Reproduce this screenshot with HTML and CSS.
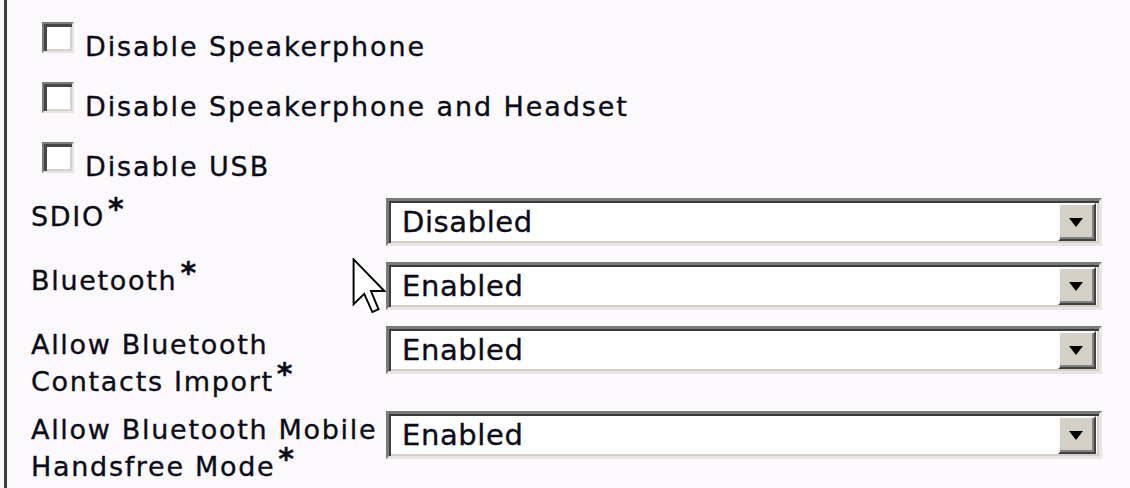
FILE: index.html
```html
<!DOCTYPE html>
<html lang="en">
<head>
    <meta charset="UTF-8">
    <title>Phone settings</title>
    <link rel="stylesheet" href="styles.css">
</head>
<body>
    <div class="panel">
        <!-- checkbox options -->
        <div class="check-row">
            <span class="box"></span>
            <span class="check-text">Disable Speakerphone</span>
        </div>
        <div class="check-row">
            <span class="box"></span>
            <span class="check-text">Disable Speakerphone and Headset</span>
        </div>
        <div class="check-row">
            <span class="box"></span>
            <span class="check-text">Disable USB</span>
        </div>

        <!-- drop down fields -->
        <div class="fields">
            <div class="field">
                <div class="field-label">SDIO<span class="req">*</span></div>
                <div class="combo">
                    <span class="combo-value">Disabled</span>
                    <span class="combo-btn"><span class="arrow"></span></span>
                </div>
            </div>
            <div class="field">
                <div class="field-label">Bluetooth<span class="req">*</span></div>
                <div class="combo">
                    <span class="combo-value">Enabled</span>
                    <span class="combo-btn"><span class="arrow"></span></span>
                </div>
            </div>
            <div class="field tall">
                <div class="field-label">Allow Bluetooth Contacts Import<span class="req">*</span></div>
                <div class="combo">
                    <span class="combo-value">Enabled</span>
                    <span class="combo-btn"><span class="arrow"></span></span>
                </div>
            </div>
            <div class="field tall">
                <div class="field-label">Allow Bluetooth Mobile Handsfree Mode<span class="req">*</span></div>
                <div class="combo">
                    <span class="combo-value">Enabled</span>
                    <span class="combo-btn"><span class="arrow"></span></span>
                </div>
            </div>
        </div>

        <!-- mouse pointer -->
        <svg class="cursor" width="34" height="56" viewBox="0 0 12 20">
            <path d="M0.5 0.5 V16.5 L4.3 12.8 L7.2 19.3 L9.4 18.3 L6.7 11.8 H11.5 Z" fill="#fff" stroke="#000" stroke-width="0.7" stroke-linejoin="miter"/>
        </svg>
    </div>
</body>
</html>
```

FILE: styles.css
```css
*{
    margin: 0;
    padding: 0;
    box-sizing: border-box;
}

body{
    background-color: #fcf9fc;
    font-family: "DejaVu Sans", Verdana, sans-serif;
    color: #0c0c18;
    padding-left: 4px;
}

.panel{
    position: relative;
    height: 488px;
    border-left: 3px solid #3e3e3e;
    padding: 17px 0 0 24px;
}

/* checkbox rows */
.check-row{
    display: flex;
    align-items: flex-start;
    height: 60px;
}

.box{
    display: block;
    width: 32px;
    height: 31px;
    margin: 5px 0 0 11px;
    background-color: #fff;
    border: 2px solid;
    border-color: #7c7c7c #e6e4e2 #e6e4e2 #7c7c7c;
    box-shadow: inset 3px 3px 0 #474747, inset -2px -2px 0 #d6d2cc;
}

.check-text{
    margin-left: 11px;
    font-size: 27px;
    letter-spacing: 1.9px;
    line-height: 60px;
    -webkit-text-stroke: 0.35px #0c0c18;
}

/* label + combo rows */
.fields{
    margin-top: 1px;
}

.field{
    display: grid;
    grid-template-columns: 355px 716px;
    align-items: start;
    margin-bottom: 16px;
}

.field.tall{
    margin-bottom: 11px;
}

.field-label{
    font-size: 27px;
    letter-spacing: 1.7px;
    line-height: 37px;
    -webkit-text-stroke: 0.35px #0c0c18;
}

.req{
    font-size: 30px;
    font-weight: bold;
    letter-spacing: 0;
    margin-left: 3px;
    vertical-align: 7px;
    line-height: 0;
}

.combo{
    display: flex;
    height: 48px;
    background-color: #fff;
    border: 3px solid;
    border-color: #7a7a7a #e8e6e4 #e8e6e4 #7a7a7a;
    box-shadow: inset 2px 2px 0 #3c3c3c, inset -2px -2px 0 #d4d0c8;
    padding: 2px 3px 2px 2px;
}

.combo-value{
    flex: 1;
    padding: 3px 0 0 11px;
    font-size: 29px;
    letter-spacing: 0.6px;
    line-height: 33px;
    -webkit-text-stroke: 0.35px #0c0c18;
}

.combo-btn{
    display: flex;
    align-items: center;
    justify-content: center;
    width: 38px;
    height: 38px;
    background-color: #d4d0c8;
    border: 2px solid;
    border-color: #fbfbfb #404040 #404040 #fbfbfb;
    box-shadow: inset -2px -2px 0 #808080;
}

.arrow{
    width: 0;
    height: 0;
    margin: 0 2px 0 0;
    border-left: 7px solid transparent;
    border-right: 7px solid transparent;
    border-top: 9px solid #000;
}

.cursor{
    position: absolute;
    left: 345px;
    top: 258px;
}
```
